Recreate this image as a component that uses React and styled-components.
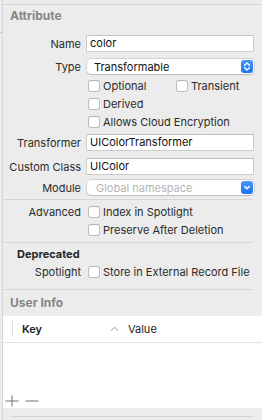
import React from 'react';
import styled, { createGlobalStyle } from 'styled-components';

const Global = createGlobalStyle`
  html, body { margin: 0; padding: 0; background: #ececec; }
  body {
    font-family: Inter, "Noto Sans", "Liberation Sans", sans-serif;
    -webkit-font-smoothing: antialiased;
  }
`;

const Page = styled.div`
  width: 262px;
  height: 420px;
  display: flex;
  overflow: hidden;
  background: #ececec;
`;

const Gutter = styled.div`
  width: 2px;
  flex: none;
  display: flex;
  flex-direction: column;
`;

const Tick = styled.div`
  margin-top: 32px;
  height: 1px;
  background: #cfcfcf;
`;

const Panel = styled.div`
  flex: 1;
  min-width: 0;
  border-left: 1px solid #d6d6d6;
  display: flex;
  flex-direction: column;
`;

const TopGap = styled.div`
  height: 4px;
  flex: none;
  border-bottom: 1px solid #d6d6d6;
`;

const SectionTitle = styled.div`
  flex: none;
  height: ${(p) => p.$h}px;
  margin-top: ${(p) => p.$mt || 0}px;
  line-height: ${(p) => p.$h}px;
  padding-left: ${(p) => p.$indent}px;
  font-size: ${(p) => p.$size}px;
  font-weight: 700;
  color: ${(p) => p.$color};
`;

const Row = styled.div`
  flex: none;
  display: flex;
  align-items: center;
  height: ${(p) => p.$h}px;
  margin-top: ${(p) => p.$mt || 0}px;
  padding-right: 8px;
`;

const Label = styled.div`
  width: 78px;
  flex: none;
  margin-right: 5px;
  text-align: right;
  font-size: 11px;
  color: #2b2b2b;
  white-space: nowrap;
`;

const TextField = styled.div`
  flex: 1;
  box-sizing: border-box;
  height: 100%;
  background: #fff;
  border: 1px solid #cdcdcd;
  border-top-color: #c2c2c2;
  padding: 0 3px;
  font-size: 11px;
  line-height: 15px;
  color: #111;
  white-space: nowrap;
`;

const Popup = styled.div`
  flex: 1;
  box-sizing: border-box;
  height: 100%;
  margin-left: 1px;
  display: flex;
  align-items: center;
  background: #fff;
  border-radius: 4px;
  box-shadow: 0 0 0 0.5px rgba(0, 0, 0, 0.22), 0 1px 1px rgba(0, 0, 0, 0.1);
  padding: 0 1px 0 7px;
  font-size: 11px;
  color: ${(p) => (p.$disabled ? '#b4b4b4' : '#111')};
`;

const PopupText = styled.span`
  flex: 1;
  white-space: nowrap;
  padding-left: ${(p) => (p.$disabled ? 2 : 0)}px;
`;

const ArrowButton = styled.div`
  width: 12px;
  height: 13px;
  border-radius: 3px;
  background: linear-gradient(#4a95f9, #1f73f1);
  display: flex;
  align-items: center;
  justify-content: center;
`;

const Checks = styled.div`
  display: grid;
  grid-template-columns: ${(p) => p.$cols || '1fr'};
  margin-left: 2px;
  flex: 1;
`;

const Check = styled.label`
  display: flex;
  align-items: center;
  gap: 3px;
  font-size: 11px;
  color: #2b2b2b;
  white-space: nowrap;
`;

const Box = styled.span`
  width: 12px;
  height: 12px;
  box-sizing: border-box;
  flex: none;
  background: #fff;
  border: 1px solid #bdbdbd;
  border-top-color: #b3b3b3;
  border-radius: 3px;
`;

const Rule = styled.div`
  flex: none;
  height: 1px;
  margin-top: ${(p) => p.$mt}px;
  margin-right: ${(p) => p.$right || 9}px;
  margin-left: ${(p) => p.$left || 0}px;
  background: #d6d6d6;
`;

const Table = styled.div`
  flex: none;
  height: 92px;
  background: #fff;
  display: flex;
  flex-direction: column;
`;

const HeaderRow = styled.div`
  height: 26px;
  flex: none;
  display: flex;
  align-items: center;
  border-bottom: 1px solid #e2e2e2;
`;

const ColSep = styled.div`
  width: 1px;
  height: 16px;
  margin-left: 9px;
  background: #dcdcdc;
`;

const HeaderCell = styled.div`
  display: flex;
  align-items: center;
  justify-content: space-between;
  width: ${(p) => p.$w}px;
  padding-left: ${(p) => p.$pl}px;
  box-sizing: border-box;
  font-size: 11px;
  font-weight: ${(p) => p.$weight || 400};
  color: #222;
`;

const TableBody = styled.div`
  flex: 1;
`;

const TableFooter = styled.div`
  flex: none;
  height: 14px;
  display: flex;
  align-items: center;
  gap: 6px;
  padding-left: 2px;
`;

const BottomBar = styled.div`
  flex: 1;
  display: flex;
  flex-direction: column;
`;

const Chevrons = () => (
  <svg width="10" height="11" viewBox="0 0 10 11">
    <path d="M2.6 4.2 L5 1.9 L7.4 4.2" fill="none" stroke="#fff" strokeWidth="1.4" strokeLinecap="round" strokeLinejoin="round" />
    <path d="M2.6 6.8 L5 9.1 L7.4 6.8" fill="none" stroke="#fff" strokeWidth="1.4" strokeLinecap="round" strokeLinejoin="round" />
  </svg>
);

const Down = () => (
  <svg width="10" height="11" viewBox="0 0 10 11">
    <path d="M2.8 4.5 L5 6.7 L7.2 4.5" fill="none" stroke="#fff" strokeWidth="1.5" strokeLinecap="round" strokeLinejoin="round" />
  </svg>
);

const SortUp = () => (
  <svg width="9" height="6" viewBox="0 0 9 6">
    <path d="M1 4.5 L4.5 1.3 L8 4.5" fill="none" stroke="#8a8a8a" strokeWidth="0.9" />
  </svg>
);

const PlusIcon = () => (
  <svg width="14" height="12" viewBox="0 0 14 12">
    <path d="M7 0.5 V11.5 M0.5 6 H13.5" stroke="#707070" strokeWidth="1" />
  </svg>
);

const MinusIcon = () => (
  <svg width="14" height="12" viewBox="0 0 14 12">
    <path d="M0.5 6 H13.5" stroke="#707070" strokeWidth="1" />
  </svg>
);

const CheckItem = ({ children }) => (
  <Check>
    <Box />
    {children}
  </Check>
);

export default function App() {
  return (
    <>
      <Global />
      <Page>
        <Gutter>
          <Tick />
        </Gutter>
        <Panel>
          <TopGap />
          <SectionTitle $h={22} $indent={7} $size={12} $color="#858585">Attribute</SectionTitle>

          <Row $h={17} $mt={8}>
            <Label>Name</Label>
            <TextField>color</TextField>
          </Row>
          <Row $h={15} $mt={7}>
            <Label>Type</Label>
            <Popup>
              <PopupText>Transformable</PopupText>
              <ArrowButton><Chevrons /></ArrowButton>
            </Popup>
          </Row>
          <Row $h={18} $mt={3}>
            <Label />
            <Checks $cols="88px 1fr">
              <CheckItem>Optional</CheckItem>
              <CheckItem>Transient</CheckItem>
            </Checks>
          </Row>
          <Row $h={18}>
            <Label />
            <Checks>
              <CheckItem>Derived</CheckItem>
            </Checks>
          </Row>
          <Row $h={18}>
            <Label />
            <Checks>
              <CheckItem>Allows Cloud Encryption</CheckItem>
            </Checks>
          </Row>
          <Row $h={17} $mt={3}>
            <Label>Transformer</Label>
            <TextField>UIColorTransformer</TextField>
          </Row>
          <Row $h={17} $mt={7}>
            <Label>Custom Class</Label>
            <TextField>UIColor</TextField>
          </Row>
          <Row $h={15} $mt={5}>
            <Label>Module</Label>
            <Popup $disabled>
              <PopupText $disabled>Global namespace</PopupText>
              <ArrowButton><Down /></ArrowButton>
            </Popup>
          </Row>
          <Rule $mt={4} />

          <Row $h={18} $mt={3}>
            <Label>Advanced</Label>
            <Checks>
              <CheckItem>Index in Spotlight</CheckItem>
            </Checks>
          </Row>
          <Row $h={18}>
            <Label />
            <Checks>
              <CheckItem>Preserve After Deletion</CheckItem>
            </Checks>
          </Row>
          <Rule $mt={3} />

          <SectionTitle $h={18} $mt={2} $indent={14} $size={11} $color="#262626">Deprecated</SectionTitle>
          <Row $h={18}>
            <Label>Spotlight</Label>
            <Checks>
              <CheckItem>Store in External Record File</CheckItem>
            </Checks>
          </Row>
          <Rule $mt={8} />

          <SectionTitle $h={26} $indent={7} $size={12} $color="#858585">User Info</SectionTitle>
          <Table>
            <HeaderRow>
              <ColSep />
              <HeaderCell $w={106} $pl={9} $weight={600}>
                Key
                <SortUp />
              </HeaderCell>
              <HeaderCell $w={80} $pl={9}>Value</HeaderCell>
            </HeaderRow>
            <TableBody />
            <TableFooter>
              <PlusIcon />
              <MinusIcon />
            </TableFooter>
          </Table>
          <BottomBar>
            <Rule $mt={8} $left={7} $right={8} />
          </BottomBar>
        </Panel>
      </Page>
    </>
  );
}
